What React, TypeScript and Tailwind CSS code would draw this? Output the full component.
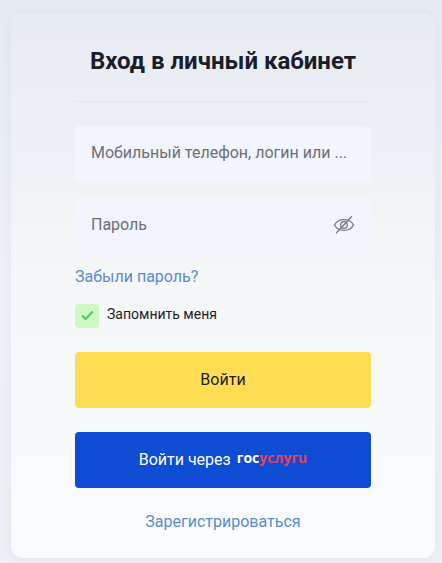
import { useState } from 'react';

function EyeOffIcon() {
  return (
    <svg width="22" height="20" viewBox="0 0 22 20" fill="none" stroke="#777a80" strokeWidth="1.3" strokeLinecap="round">
      <path d="M1.500 10C3.400 6.400 7 4.700 11 4.700s7.600 1.700 9.500 5.300c-1.900 3.600-5.500 5.300-9.500 5.300S3.400 13.600 1.500 10z" />
      <circle cx="11" cy="10" r="3.300" />
      <path d="M9.800 11.400l2.600-2.800" strokeWidth="1" />
      <path d="M18.500 1.800L3.500 17.800" />
    </svg>
  );
}

export default function App() {
  const [form, setForm] = useState({ login: '', password: '' });
  const [remember, setRemember] = useState(true);
  const [showPassword, setShowPassword] = useState(false);

  const handleSubmit = (e: React.FormEvent) => {
    e.preventDefault();
  };

  return (
    <div className="min-h-screen pt-[13px] pb-[5px] pl-[11px] pr-[7px] bg-linear-to-b from-[#e3eaf2] via-[#edf1f8] to-[#eceff5] font-[Roboto,sans-serif] text-base text-[#1b1e29]">
      <main className="rounded-xl px-16 pt-8 pb-6 bg-linear-to-b from-[#e6eaf2] via-[#f6f7f9] via-50% to-[#f9fbfd] shadow-[0_0_8px_rgba(205,215,232,0.4)]">
        <h1 className="text-2xl font-bold text-center whitespace-nowrap -mx-4">Вход в личный кабинет</h1>
        <hr className="mt-6 mb-6 border-[#dee5f1]" />

        <form onSubmit={handleSubmit} className="flex flex-col">
          <input type="text" aria-label="Мобильный телефон, логин" value={form.login}
            onChange={e => setForm({ ...form, login: e.target.value })}
            placeholder="Мобильный телефон, логин или ..."
            className="w-full h-14 rounded bg-[#f2f5fd] px-4 pb-1 outline-none placeholder:text-[#6c6f78]" />

          <div className="mt-4 h-14 flex items-center rounded bg-[#f2f5fd] px-4 pb-0.5">
            <input type={showPassword ? 'text' : 'password'} aria-label="Пароль" value={form.password}
              onChange={e => setForm({ ...form, password: e.target.value })}
              placeholder="Пароль"
              className="flex-1 min-w-0 bg-transparent outline-none placeholder:text-[#6c6f78]" />
            <button type="button" aria-label="Показать пароль" onClick={() => setShowPassword(!showPassword)}>
              <EyeOffIcon />
            </button>
          </div>

          <a href="#forgot" className="mt-[11px] self-start text-[#5a8dd0]">Забыли пароль?</a>

          <label className="mt-[15px] self-start flex items-center gap-2 text-sm">
            <span className="grid size-6">
              <input type="checkbox" checked={remember} onChange={e => setRemember(e.target.checked)}
                className="peer appearance-none size-6 rounded bg-[#cdf9c5] col-start-1 row-start-1" />
              <svg viewBox="0 0 24 24" fill="none" stroke="#5cc566" strokeWidth="2.200"
                className="size-6 col-start-1 row-start-1 pointer-events-none invisible peer-checked:visible">
                <path d="M7 11.500l3.600 3.500 7.200-7.500" />
              </svg>
            </span>
            <span className="pb-1">Запомнить меня</span>
          </label>

          <button type="submit" className="mt-6 h-14 rounded bg-[#ffdd52]">Войти</button>

          <button type="button" className="mt-6 h-14 rounded bg-[#0d4cd3] text-white flex items-center justify-center gap-1.5">
            Войти через
            <span role="img" aria-label="госуслуги" className="font-['Open_Sans',sans-serif] text-sm font-bold pb-1">
              гос<span className="text-[#e8415c]">услугu</span>
            </span>
          </button>
        </form>

        <div className="mt-[22px] text-center">
          <a href="#signup" className="text-[#5a8dd0]">Зарегистрироваться</a>
        </div>
      </main>
    </div>
  );
}
